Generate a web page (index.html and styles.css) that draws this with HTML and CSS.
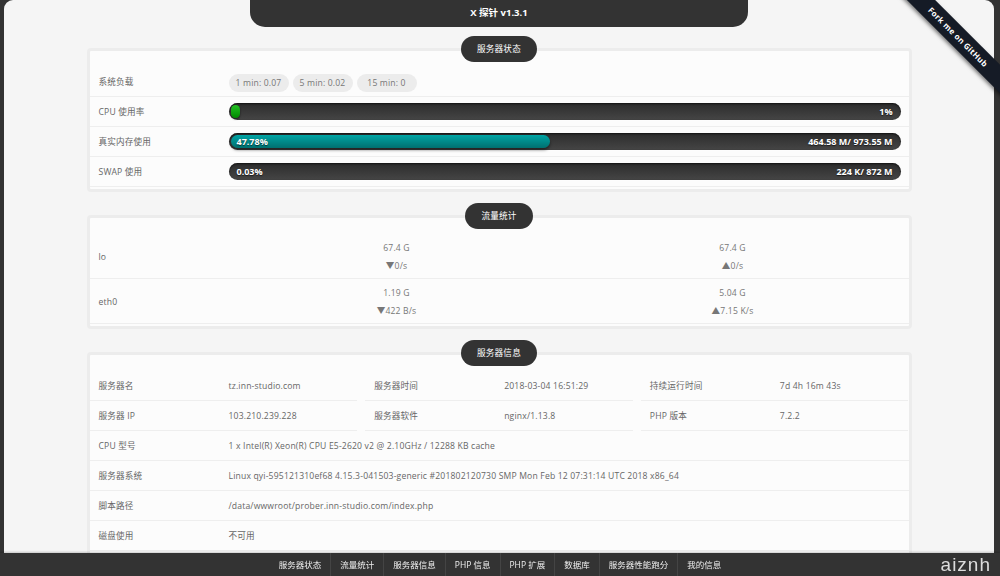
FILE: index.html
```html
<!DOCTYPE html>
<html lang="zh-CN">
<head>
<meta charset="utf-8">
<title>X 探针 v1.3.1</title>
<link rel="stylesheet" href="styles.css">
</head>
<body>
<div class="page">
  <h1 class="title">X 探针 v1.3.1</h1>

  <section class="card">
    <h2 class="card-title">服务器状态</h2>
    <div class="row">
      <div class="label">系统负载</div>
      <div class="val"><span class="chip">1 min: 0.07</span><span class="chip">5 min: 0.02</span><span class="chip">15 min: 0</span></div>
    </div>
    <div class="row">
      <div class="label">CPU 使用率</div>
      <div class="bar"><div class="fill fill-green" style="width:1%"></div><div class="bar-text"><span></span><span>1%</span></div></div>
    </div>
    <div class="row">
      <div class="label">真实内存使用</div>
      <div class="bar"><div class="fill fill-teal" style="width:47.78%"></div><div class="bar-text"><span>47.78%</span><span>464.58 M/ 973.55 M</span></div></div>
    </div>
    <div class="row">
      <div class="label">SWAP 使用</div>
      <div class="bar"><div class="fill fill-teal" style="width:0"></div><div class="bar-text"><span>0.03%</span><span>224 K/ 872 M</span></div></div>
    </div>
  </section>

  <section class="card">
    <h2 class="card-title">流量统计</h2>
    <div class="row tall">
      <div class="label">lo</div>
      <div class="cell"><div>67.4 G</div><div>▼0/s</div></div>
      <div class="cell"><div>67.4 G</div><div>▲0/s</div></div>
    </div>
    <div class="row tall">
      <div class="label">eth0</div>
      <div class="cell"><div>1.19 G</div><div>▼422 B/s</div></div>
      <div class="cell"><div>5.04 G</div><div>▲7.15 K/s</div></div>
    </div>
  </section>

  <section class="card">
    <h2 class="card-title">服务器信息</h2>
    <div class="triple">
      <div class="row"><div class="label">服务器名</div><div class="val">tz.inn-studio.com</div></div>
      <div class="row"><div class="label">服务器时间</div><div class="val">2018-03-04 16:51:29</div></div>
      <div class="row"><div class="label">持续运行时间</div><div class="val">7d 4h 16m 43s</div></div>
      <div class="row"><div class="label">服务器 IP</div><div class="val">103.210.239.228</div></div>
      <div class="row"><div class="label">服务器软件</div><div class="val">nginx/1.13.8</div></div>
      <div class="row"><div class="label">PHP 版本</div><div class="val">7.2.2</div></div>
    </div>
    <div class="row"><div class="label">CPU 型号</div><div class="val">1 x Intel(R) Xeon(R) CPU E5-2620 v2 @ 2.10GHz / 12288 KB cache</div></div>
    <div class="row"><div class="label">服务器系统</div><div class="val">Linux qyi-595121310ef68 4.15.3-041503-generic #201802120730 SMP Mon Feb 12 07:31:14 UTC 2018 x86_64</div></div>
    <div class="row"><div class="label">脚本路径</div><div class="val">/data/wwwroot/prober.inn-studio.com/index.php</div></div>
    <div class="row"><div class="label">磁盘使用</div><div class="val">不可用</div></div>
    <div class="row"><div class="label">PHP 进程</div><div class="val">-</div></div>
  </section>
</div>

<a class="ribbon" href="#">Fork me on GitHub</a>

<nav class="nav">
  <a href="#">服务器状态</a>
  <a href="#">流量统计</a>
  <a href="#">服务器信息</a>
  <a href="#">PHP 信息</a>
  <a href="#">PHP 扩展</a>
  <a href="#">数据库</a>
  <a href="#">服务器性能跑分</a>
  <a href="#">我的信息</a>
</nav>
<div class="mark">aiznh</div>
</body>
</html>
```
FILE: styles.css
```css
* { box-sizing: border-box; }
html, body { margin: 0; height: 100%; overflow: hidden; }
body {
  position: relative;
  background: #333;
  font: 8.6px/1.4 "Open Sans", "Noto Sans CJK SC", sans-serif;
  letter-spacing: 0.17px;
  color: #666;
}
.page {
  margin: 7px 6px 0 4px;
  background: #f5f5f5;
  border-radius: 9px 9px 0 0;
  min-height: 640px;
  padding-bottom: 40px;
}
.title {
  width: 498px;
  height: 27px;
  margin: -7px auto 0;
  background: #333;
  border-radius: 0 0 15px 15px;
  color: #fff;
  font-size: 9.5px;
  font-weight: bold;
  letter-spacing: 0;
  line-height: 26px;
  text-align: center;
}
.card {
  width: 825px;
  margin: 21px auto 0;
  border: 3px solid #ececec;
  border-radius: 4px;
  background: #fcfcfc;
  padding-bottom: 2px;
}
.card + .card { margin-top: 23px; }
.card-title {
  width: fit-content;
  height: 26px;
  margin: -15px auto 5px;
  padding: 0 16px;
  border-radius: 13px;
  background: #333;
  color: #fff;
  font-size: 8.6px;
  font-weight: normal;
  line-height: 26px;
}
.row {
  display: grid;
  grid-template-columns: 130px 1fr;
  align-items: center;
  height: 30px;
  padding: 2px 8px 0 9px;
  border-bottom: 1px solid #eee;
}
.row.tall {
  grid-template-columns: 130px 1fr 1fr;
  height: 45px;
}
.cell {
  text-align: center;
  line-height: 18px;
  color: #777;
}
.triple {
  display: grid;
  grid-template-columns: repeat(3, 1fr);
  column-gap: 8px;
}
.val { white-space: nowrap; }
.chip {
  display: inline-block;
  width: 60px;
  height: 18px;
  margin-right: 4px;
  border-radius: 9px;
  background: #ececec;
  color: #777;
  line-height: 18px;
  text-align: center;
}
.bar {
  display: grid;
  height: 17px;
  margin-top: -2px;
  border-radius: 9px;
  background: linear-gradient(#2c2c2c, #454545);
  box-shadow: inset 0 1px 2px rgba(0,0,0,.6), 0 1px 0 rgba(255,255,255,.4);
  padding: 2px;
}
.bar > * { grid-area: 1 / 1; }
.fill {
  justify-self: start;
  min-width: 0;
  height: 13px;
  border-radius: 7px;
}
.fill-green {
  min-width: 9px;
  background: linear-gradient(#22c022, #008a00);
  box-shadow: 0 1px 2px rgba(0,0,0,.6);
}
.fill-teal {
  background: linear-gradient(#00a4a4, #007070);
  box-shadow: 0 2px 3px rgba(0,0,0,.5);
}
.bar-text {
  display: flex;
  justify-content: space-between;
  align-items: center;
  padding: 0 6px;
  color: #fff;
  font-size: 9px;
  font-weight: bold;
  letter-spacing: 0;
  line-height: 13px;
  text-shadow: 0 1px 1px rgba(0,0,0,.6);
}
.ribbon {
  position: absolute;
  top: 27px;
  left: 878px;
  width: 160px;
  height: 20px;
  background: #151b26;
  color: #fff;
  font: bold 8px/20px "Open Sans", sans-serif;
  letter-spacing: 0.3px;
  text-align: center;
  text-decoration: none;
  transform: rotate(45deg);
  box-shadow: 0 2px 4px rgba(0,0,0,.5);
}
.nav {
  position: fixed;
  left: 0;
  right: 0;
  bottom: 0;
  height: 23px;
  display: flex;
  justify-content: center;
  background: #333;
  box-shadow: 0 -1px 2px rgba(0,0,0,.2);
}
.nav a {
  padding: 0 9px;
  border-left: 1px solid #444;
  color: #eee;
  font-size: 8.5px;
  letter-spacing: 0;
  line-height: 23px;
  text-decoration: none;
}
.nav a:first-child { border-left: 0; }
.mark {
  position: fixed;
  right: 9px;
  bottom: 0;
  color: #ddd;
  font: 19px/23px "Liberation Sans", sans-serif;
  letter-spacing: 1px;
}
```
